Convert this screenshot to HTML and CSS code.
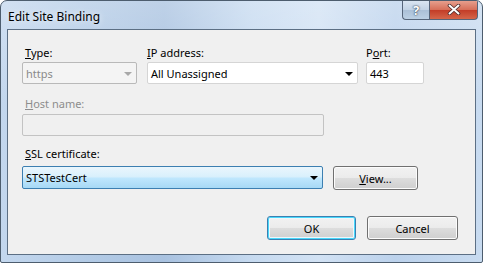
FILE: index.html
```html
<!DOCTYPE html>
<html lang="en">
<head>
  <meta charset="UTF-8">
  <title>Edit Site Binding</title>
  <link rel="stylesheet" href="styles.css">
</head>
<body>
  <div class="window">
    <div class="titlebar">
      <span class="title">Edit Site Binding</span>
      <div class="caption-buttons">
        <span class="cap-btn help">?</span>
        <span class="cap-btn close">
          <svg width="14" height="11" viewBox="0 0 14 11">
            <path d="M2.5 1.5 L11.5 9.5 M11.5 1.5 L2.5 9.5" stroke="#4a2a2a" stroke-width="3.6" stroke-linecap="round"/>
            <path d="M2.5 1.5 L11.5 9.5 M11.5 1.5 L2.5 9.5" stroke="#ffffff" stroke-width="2" stroke-linecap="round"/>
          </svg>
        </span>
      </div>
    </div>

    <div class="client">
      <div class="row-top">
        <div class="field col-type">
          <label><u>T</u>ype:</label>
          <div class="combo disabled">
            <span>https</span>
            <span class="arrow"></span>
          </div>
        </div>
        <div class="field col-ip">
          <label><u>I</u>P address:</label>
          <div class="combo">
            <span>All Unassigned</span>
            <span class="arrow"></span>
          </div>
        </div>
        <div class="field col-port">
          <label>P<u>o</u>rt:</label>
          <div class="textbox">443</div>
        </div>
      </div>

      <div class="field host">
        <label class="dim"><u>H</u>ost name:</label>
        <div class="textbox disabled"></div>
      </div>

      <div class="field ssl">
        <label><u>S</u>SL certificate:</label>
        <div class="ssl-row">
          <div class="combo hot">
            <span>STSTestCert</span>
            <span class="arrow"></span>
          </div>
          <button class="btn view"><u>V</u>iew...</button>
        </div>
      </div>

      <div class="actions">
        <button class="btn default">OK</button>
        <button class="btn">Cancel</button>
      </div>
    </div>
  </div>
</body>
</html>
```

FILE: styles.css
```css
body {
  margin: 0;
  font-family: "Noto Sans", "DejaVu Sans", sans-serif;
  font-size: 11px;
  color: #000;
  background: #fff;
}

.window {
  width: 483px;
  height: 263px;
  box-sizing: border-box;
  border: 1px solid #4d5d6e;
  border-radius: 7px 7px 2px 2px;
  background:
    linear-gradient(180deg, rgba(255,255,255,0.25) 0%, rgba(255,255,255,0) 40%),
    linear-gradient(90deg, #c3d7ee 0%, #b3cbe6 18%, #a9c2e0 34%, #c6daf0 52%, #d2e2f4 66%, #bcd2ec 82%, #c8dbf0 100%);
  display: flex;
  flex-direction: column;
  overflow: hidden;
}

.titlebar {
  height: 28px;
  display: flex;
  justify-content: space-between;
  align-items: flex-start;
}

.title {
  margin: 7px 0 0 7px;
  font-size: 12px;
  color: #000;
  text-shadow: 0 0 6px rgba(255,255,255,0.9);
}

.caption-buttons {
  display: flex;
  margin-right: 4px;
  margin-top: -1px;
}

.cap-btn {
  height: 19px;
  display: flex;
  align-items: center;
  justify-content: center;
  border: 1px solid #56657a;
  border-top: none;
}

.help {
  width: 26px;
  border-radius: 0 0 0 4px;
  border-right: none;
  background: linear-gradient(180deg, #dce7f3 0%, #c3d3e5 50%, #aabfd6 51%, #bcd0e4 100%);
  color: #fff;
  font-weight: bold;
  font-size: 13px;
  text-shadow: 0 0 2px #2d3d52, 0 0 1px #2d3d52;
}

.close {
  width: 47px;
  border-radius: 0 0 4px 0;
  background: linear-gradient(180deg, #e8a493 0%, #d7705a 50%, #c23a25 51%, #d5664a 100%);
}

.client {
  margin: 0 6px 7px 6px;
  flex: 1;
  border: 1px solid #5c6f84;
  background: #f0f0f0;
  padding: 15px 17px 0 14px;
}

label {
  display: block;
  height: 15px;
  line-height: 15px;
  margin-bottom: 2px;
}

label.dim {
  color: #8d8d8d;
}

.row-top {
  display: flex;
}

.col-type {
  width: 115px;
  margin-right: 10px;
}

.col-ip {
  width: 211px;
  margin-right: 8px;
}

.col-port {
  width: 58px;
}

.col-type label {
  padding-left: 3px;
}

.combo,
.textbox {
  height: 22px;
  box-sizing: border-box;
  border: 1px solid #d5d5d5;
  border-radius: 2px;
  background: #fff;
  display: flex;
  align-items: center;
  padding-left: 3px;
}

.combo {
  justify-content: space-between;
  padding-right: 4px;
}

.combo.disabled {
  background: #f4f4f4;
  border-color: #b9b9b9;
  color: #8a8a8a;
}

.arrow {
  width: 0;
  height: 0;
  border-left: 4px solid transparent;
  border-right: 4px solid transparent;
  border-top: 4px solid #000;
  margin-top: 1px;
}

.combo.disabled .arrow {
  border-top-color: #a8a8a8;
}

.textbox.disabled {
  background: #f0f0f0;
  border-color: #c3c3c3;
}

.host {
  margin-top: 12px;
  width: 302px;
}

.host label {
  margin-bottom: 3px;
  padding-left: 3px;
}

.ssl {
  margin-top: 10px;
}

.ssl label {
  margin-bottom: 5px;
  padding-left: 3px;
}

.ssl-row {
  display: flex;
  align-items: flex-start;
}

.combo.hot {
  width: 301px;
  height: 23px;
  border-color: #3c7fb1;
  background: linear-gradient(180deg, #eaf6fd 0%, #d9f0fc 45%, #bee6fd 55%, #a7d9f5 100%);
}

.btn {
  font-family: inherit;
  font-size: 11px;
  color: #000;
  height: 24px;
  box-sizing: border-box;
  border: 1px solid #707070;
  border-radius: 3px;
  background: linear-gradient(180deg, #f2f2f2 0%, #ebebeb 50%, #dddddd 51%, #cfcfcf 100%);
  box-shadow: inset 0 0 0 1px #fcfcfc;
  padding: 0;
}

.view {
  width: 85px;
  margin-left: 10px;
}

.actions {
  display: flex;
  justify-content: flex-end;
  margin-top: 26px;
}

.actions .btn {
  width: 89px;
}

.actions .btn + .btn {
  margin-left: 11px;
  width: 91px;
}

.btn.default {
  border-color: #3c7fb1;
  box-shadow: inset 0 0 0 1px #48d8fb, inset 0 0 0 2px #f0f6fa;
}
```
